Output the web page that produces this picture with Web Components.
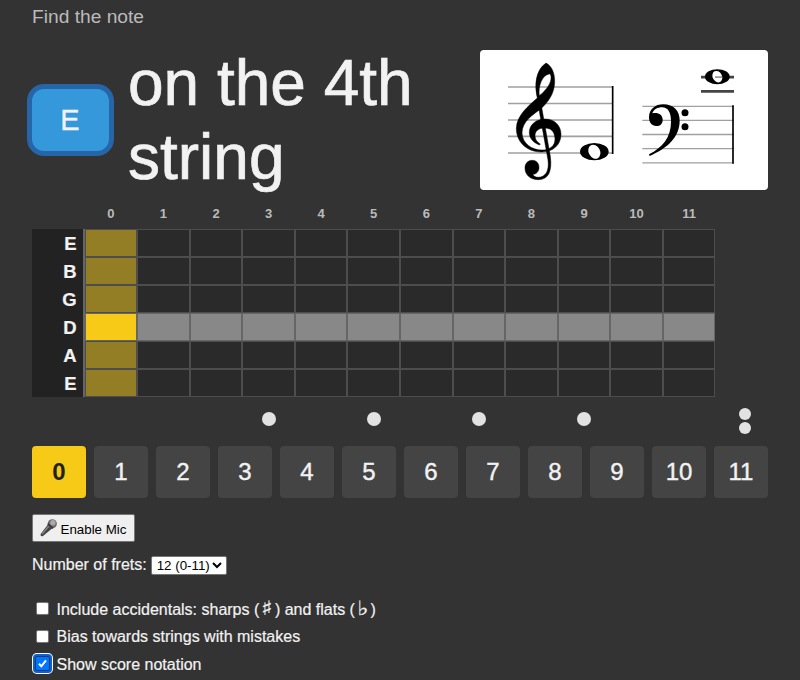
<!DOCTYPE html>
<html lang="en">
<head>
<meta charset="utf-8">
<title>Find the note</title>
<style>
body { margin: 0; background: #333; color: #f2f2f2; font: 16px "Liberation Sans", Arial, sans-serif; }
</style>
</head>
<body>
<fret-trainer></fret-trainer>
<script>
function define(name, html) {
  customElements.define(name, class extends HTMLElement {
    constructor() {
      super();
      this.attachShadow({ mode: 'open' }).innerHTML = typeof html === 'function' ? html(this) : html;
    }
  });
}

define('note-chip', `<style>
:host { display: flex; align-items: center; justify-content: center; box-sizing: border-box; width: 87px; height: 72px; padding-right: 1px; border: 5px solid #2565a8; border-radius: 17px; background: #3498db; font-size: 29px; -webkit-text-stroke: .3px; }
</style><slot></slot>`);

define('score-view', `<style>
:host { display: block; width: 288px; height: 140px; border-radius: 4px; background: #fff; overflow: hidden; }
svg { display: block; }
</style>
<svg width="288" height="140" viewBox="15 15 864 420">
  <g stroke="#a0a0a0" stroke-width="5">
    <path d="M99 126H414M99 175.500H414M99 225H414M99 274H414M99 324H414"/>
    <path stroke-width="4" d="M502 184H776M502 226H776M502 268.500H776M502 311H776M502 353.500H776"/>
  </g>
  <path stroke="#000" stroke-width="5" d="M413 123V327M774 181V356"/>
  <path stroke="#444" stroke-width="8" d="M678 96.500H777M678 139H777"/>
  <path fill-rule="evenodd" d="M213 54C230 62 240 85 239 112C238 147 218 173 198 191C174 209 141 229 141 264C142 296 171 315 201 315C226 315 240 302 240 281C239 261 229 249 209 249C190 249 180 258 180 273C181 286 187 291 196 297L193 300C171 291 163 277 163 262C163 238 185 222 210 222C239 222 258 242 258 268C258 300 234 321 200 321C155 321 124 291 124 250C125 211 160 183 187 159C178 121 181 76 213 54ZM222 87C202 91 189 122 193 152C216 134 230 112 228 95C227 88 226 86 222 87Z" stroke="#000" stroke-width="1.500"/>
  <path stroke="#000" stroke-width="1.500" d="M191 188L200 187L226 334C232 380 220 404 190 404C165 404 150 389 150 369C150 355 159 346 172 346C184 346 192 355 192 367C192 380 184 388 173 388C176 394 182 397 190 397C212 396 223 378 219 345Z"/>
  <path d="M522 328C562 307 588 278 588 230C588 202 579 187 561 187C548 187 536 193 532 205C549 201 563 209 563 224C563 236 556 243 544 243C530 243 522 232 522 217C522 192 541 178 565 178C596 178 614 198 614 226C614 278 578 309 524 333Z"/>
  <circle cx="630" cy="203" r="10.500"/><circle cx="630" cy="245" r="10.500"/>
  <ellipse cx="358" cy="320" rx="43" ry="26"/>
  <ellipse cx="358" cy="320" rx="17" ry="22" fill="#fff" transform="rotate(-28 358 320)"/>
  <ellipse cx="727" cy="95" rx="37" ry="22.500"/>
  <ellipse cx="727" cy="95" rx="14" ry="18" fill="#fff" transform="rotate(-28 727 95)"/>
  <path stroke="#999" stroke-width="5" d="M720 96.500H741"/>
</svg>`);

define('fret-board', () => {
  const names = ['E', 'B', 'G', 'D', 'A', 'E'];
  const heads = Array.from({ length: 12 }, (_, i) => `<b class="head">${i}</b>`).join('');
  const rows = names.map(n => `<b class="name">${n}</b>` + Array.from({ length: 12 }, (_, i) =>
    `<i class="cell${i ? '' : ' open'}${n === 'D' ? ' active' : ''}"></i>`).join('') + '<span></span>').join('');
  const dots = Array.from({ length: 14 }, (_, i) =>
    [4, 6, 8, 10].includes(i) ? '<span class="mark"><i></i></span>' :
    i === 13 ? '<span class="mark double"><i></i><i></i></span>' : '<span></span>').join('');
  return `<style>
:host { display: block; }
.grid { display: grid; grid-template-columns: repeat(14, 1fr); }
.heads { height: 29px; padding-top: 0; }
.head { color: #bbb; font-size: 13px; line-height: 27px; text-align: center; }
.rows { grid-auto-rows: 28px; }
.name { background: #222; border-right: 2px solid #666; box-sizing: border-box; padding: 1px 6px 0 0; text-align: right; font-size: 18.500px; line-height: 27px; -webkit-text-stroke: .2px; }
.cell { border: 1px solid #4d4d4d; background: #2a2a2a; }
.open { background: #937e25; }
.active { border-color: #666; background: #888; }
.open.active { background: #f7ca18; }
.dots { height: 44px; align-items: center; }
.mark { display: flex; flex-direction: column; align-items: center; gap: 2px; }
.mark i { width: 14px; height: 14px; border-radius: 50%; background: #e2e2e2; }
.double { padding: 4px 0 0 6px; }
.double i { width: 12px; height: 12px; }
</style>
<div class="grid heads"><span></span>${heads}</div>
<div class="grid rows">${rows}</div>
<div class="grid dots">${dots}</div>`;
});

define('fret-button', `<style>
:host { display: flex; align-items: center; justify-content: center; height: 52px; border-radius: 4px; background: #444; font-size: 24px; -webkit-text-stroke: .4px; }
:host([selected]) { background: #f7ca18; color: #222; font-weight: bold; -webkit-text-stroke: 0; }
</style><slot></slot>`);

define('mic-button', `<style>
:host { display: flex; align-items: center; box-sizing: border-box; width: 103px; height: 28px; padding-left: 7px; gap: 3.5px; border: 1px solid #777; border-radius: 2px; background: #efefef; color: #000; font-size: 13.333px; white-space: nowrap; }
svg { flex: none; }
span { padding-top: 2px; }
</style>
<svg width="17" height="18" viewBox="0 0 17 18">
  <path d="M.6 15L8 5.500L12.300 9.300L2.700 17.200Q.2 17.800 .6 15Z" fill="#444"/>
  <path d="M2 15L9 7" stroke="#888" stroke-width="1.200"/>
  <circle cx="12.300" cy="4.800" r="4.600" fill="#6c6c6c"/>
  <circle cx="12.900" cy="3.800" r="2.700" fill="#aaa"/>
  <path d="M7.800 4.800L12.800 9.300" stroke="#333" stroke-width="1.600"/>
</svg><span><slot></slot></span>`);

define('fret-count', `<style>
:host { display: flex; align-items: center; gap: 4px; height: 20px; -webkit-text-stroke: .2px; }
.select { display: flex; align-items: center; justify-content: space-between; box-sizing: border-box; width: 76px; height: 19px; padding: 0 4px 0 5px; border: 1px solid #767676; border-radius: 2px; background: #fff; color: #000; font-size: 13.333px; white-space: nowrap; -webkit-text-stroke: 0; }
</style><slot></slot><span class="select">12 (0-11)<svg width="10" height="7" viewBox="0 0 10 7"><path d="M1 1L5 5L9 1" fill="none" stroke="#000" stroke-width="2"/></svg></span>`);

define('check-option', `<style>
:host { display: flex; align-items: center; height: 20px; white-space: nowrap; -webkit-text-stroke: .2px; }
i { flex: none; box-sizing: border-box; width: 13px; height: 13px; margin: -2px 7.500px 0 4px; border: 1px solid #767676; border-radius: 2px; background: #fff; }
svg { display: none; }
:host([checked]) i { width: 15px; height: 15px; margin: -3px 6.500px 0 3px; border: 1px solid #153c70; background: #0075ff; box-shadow: 0 0 0 2px #0b62cf, 0 0 0 3px #fff; }
:host([checked]) svg { display: block; }
</style><i><svg width="13" height="13" viewBox="0 0 13 13"><path d="M3 6.800L5.300 9.300L10 3.300" fill="none" stroke="#fff" stroke-width="2"/></svg></i><span><slot></slot></span>`);

/* Accidental sign set inline; the glyph is real text. */
define('music-sign', `<style>
:host { display: inline-block; width: 15.600px; text-align: center; line-height: 16px; font-family: "DejaVu Sans", sans-serif; font-size: 20px; }
span { display: inline-block; transform: scaleX(1.200); }
</style><span><slot></slot></span>`);

define('fret-trainer', () => `<style>
:host { display: flow-root; box-sizing: border-box; width: 800px; height: 680px; padding: 0 32px; overflow: hidden; }
.lead { height: 50px; color: #bbb; font-size: 19.200px; line-height: 33px; }
.question { display: flex; align-items: center; height: 140px; margin-left: -5px; }
h1 { width: 352px; margin: 0 0 0 14px; padding-bottom: 1px; font-size: 64px; font-weight: normal; line-height: 74px; -webkit-text-stroke: .7px; }
fret-board { padding-top: 10px; }
.buttons { display: grid; grid-template-columns: repeat(12, 1fr); gap: 8px; padding-top: 5px; }
mic-button { margin: 16px 0 13px; }
.checks { display: flex; flex-direction: column; padding-top: 24px; gap: 8px; }
</style>
<div class="lead">Find the note</div>
<div class="question"><note-chip>E</note-chip><h1>on the 4th string</h1><score-view></score-view></div>
<fret-board></fret-board>
<div class="buttons">${Array.from({ length: 12 }, (_, i) => `<fret-button${i ? '' : ' selected'}>${i}</fret-button>`).join('')}</div>
<mic-button>Enable Mic</mic-button>
<fret-count>Number of frets:</fret-count>
<div class="checks">
<check-option>Include accidentals: sharps (<music-sign>♯</music-sign>) and flats (<music-sign>♭</music-sign>)</check-option>
<check-option>Bias towards strings with mistakes</check-option>
<check-option checked>Show score notation</check-option>
</div>`);
</script>
</body>
</html>
